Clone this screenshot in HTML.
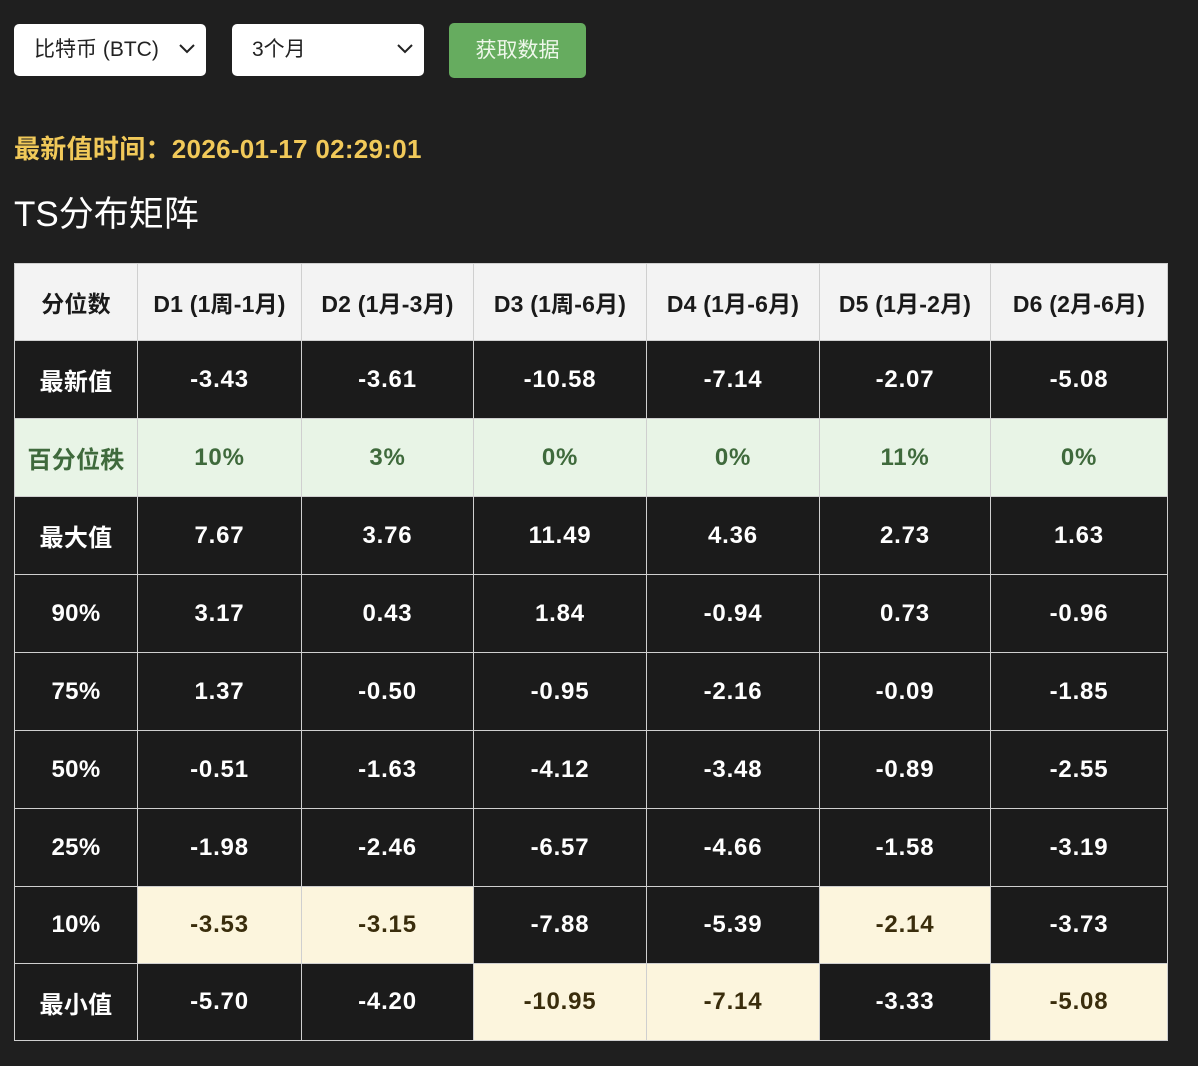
<!DOCTYPE html>
<html><head><meta charset="utf-8">
<style>
html,body{margin:0;padding:0;}
body{width:1198px;height:1066px;background:#1f1f1f;position:relative;overflow:hidden;font-family:"Liberation Sans","Noto Sans CJK SC",sans-serif;}
.sel{position:absolute;top:24px;height:52px;width:192px;background:#fff;border-radius:5px;box-sizing:border-box;font-size:21px;color:#222;line-height:52px;padding-left:20px;}
.sel svg{position:absolute;right:10px;top:19px;}
.btn{position:absolute;left:449px;top:23px;width:137px;height:55px;background:#66ac5f;border-radius:5px;color:#eef7ea;font-size:21px;line-height:55px;text-align:center;}
.time{position:absolute;left:14px;top:129px;font-size:26px;font-weight:bold;color:#f1c959;letter-spacing:0.3px;}
.title{position:absolute;left:14px;top:186px;font-size:35px;color:#fff;}
table{position:absolute;left:14px;top:263px;border-collapse:collapse;table-layout:fixed;width:1153px;}
td{border:1px solid #cfcfcf;text-align:center;font-size:24px;font-weight:bold;color:#fff;background:#1b1b1b;padding:0;letter-spacing:0.8px;}
td:first-child{letter-spacing:0.3px;}
tr.h td{background:#f3f3f3;color:#1a1a1a;font-size:23px;letter-spacing:0.2px;}
tr.g td{background:#e8f4e6;color:#3f6a3c;}
td.y{background:#fcf5dd;color:#3a2d0c;}
</style></head><body>
<div class="sel" style="left:14px">比特币 (BTC)<svg width="18" height="12" viewBox="0 0 18 12"><path d="M2 2L9 9L16 2" stroke="#222" stroke-width="2" fill="none"/></svg></div>
<div class="sel" style="left:232px">3个月<svg width="18" height="12" viewBox="0 0 18 12"><path d="M2 2L9 9L16 2" stroke="#222" stroke-width="2" fill="none"/></svg></div>
<div class="btn">获取数据</div>
<div class="time">最新值时间：2026-01-17 02:29:01</div>
<div class="title">TS分布矩阵</div>
<table>
<colgroup><col style="width:123px"><col style="width:164px"><col style="width:172px"><col style="width:173px"><col style="width:173px"><col style="width:171px"><col style="width:177px"></colgroup>
<tr class="h" style="height:77px"><td>分位数</td><td>D1 (1周-1月)</td><td>D2 (1月-3月)</td><td>D3 (1周-6月)</td><td>D4 (1月-6月)</td><td>D5 (1月-2月)</td><td>D6 (2月-6月)</td></tr>
<tr style="height:78px"><td>最新值</td><td>-3.43</td><td>-3.61</td><td>-10.58</td><td>-7.14</td><td>-2.07</td><td>-5.08</td></tr>
<tr class="g" style="height:78px"><td>百分位秩</td><td>10%</td><td>3%</td><td>0%</td><td>0%</td><td>11%</td><td>0%</td></tr>
<tr style="height:78px"><td>最大值</td><td>7.67</td><td>3.76</td><td>11.49</td><td>4.36</td><td>2.73</td><td>1.63</td></tr>
<tr style="height:78px"><td>90%</td><td>3.17</td><td>0.43</td><td>1.84</td><td>-0.94</td><td>0.73</td><td>-0.96</td></tr>
<tr style="height:78px"><td>75%</td><td>1.37</td><td>-0.50</td><td>-0.95</td><td>-2.16</td><td>-0.09</td><td>-1.85</td></tr>
<tr style="height:78px"><td>50%</td><td>-0.51</td><td>-1.63</td><td>-4.12</td><td>-3.48</td><td>-0.89</td><td>-2.55</td></tr>
<tr style="height:78px"><td>25%</td><td>-1.98</td><td>-2.46</td><td>-6.57</td><td>-4.66</td><td>-1.58</td><td>-3.19</td></tr>
<tr style="height:77px"><td>10%</td><td class="y">-3.53</td><td class="y">-3.15</td><td>-7.88</td><td>-5.39</td><td class="y">-2.14</td><td>-3.73</td></tr>
<tr style="height:77px"><td>最小值</td><td>-5.70</td><td>-4.20</td><td class="y">-10.95</td><td class="y">-7.14</td><td>-3.33</td><td class="y">-5.08</td></tr>
</table>
</body></html>
